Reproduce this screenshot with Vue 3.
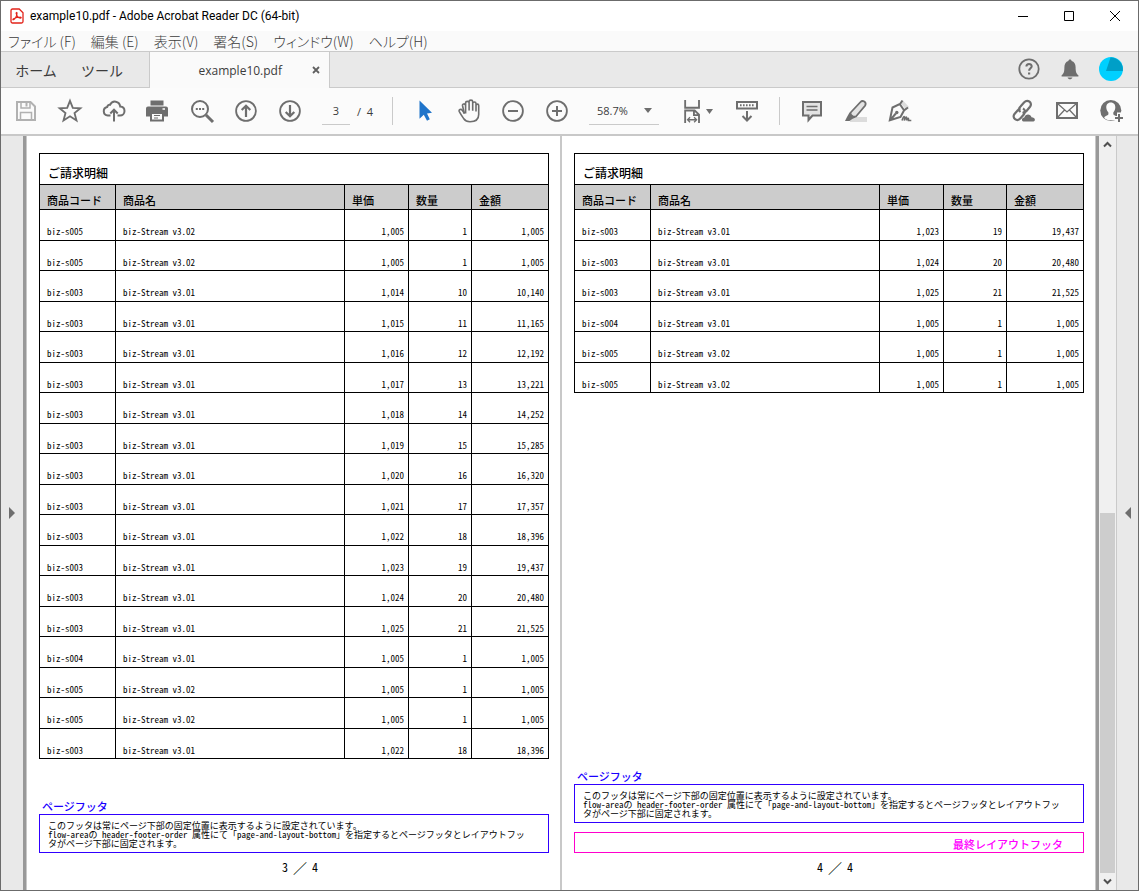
<script setup>
import { ref } from 'vue'

const menus = ['ファイル (F)', '編集 (E)', '表示(V)', '署名(S)', 'ウィンドウ(W)', 'ヘルプ(H)']
const headings = ['商品コード', '商品名', '単価', '数量', '金額']

const row = (code, version, price, qty, total) => ({ code, name: `biz-Stream v${version}`, price, qty, total })

const tail = [
  row('biz-s003', '3.01', '1,023', 19, '19,437'),
  row('biz-s003', '3.01', '1,024', 20, '20,480'),
  row('biz-s003', '3.01', '1,025', 21, '21,525'),
  row('biz-s004', '3.01', '1,005', 1, '1,005'),
  row('biz-s005', '3.02', '1,005', 1, '1,005'),
  row('biz-s005', '3.02', '1,005', 1, '1,005'),
]

const pages = [
  {
    number: 3,
    last: false,
    rows: [
      row('biz-s005', '3.02', '1,005', 1, '1,005'),
      row('biz-s005', '3.02', '1,005', 1, '1,005'),
      row('biz-s003', '3.01', '1,014', 10, '10,140'),
      row('biz-s003', '3.01', '1,015', 11, '11,165'),
      row('biz-s003', '3.01', '1,016', 12, '12,192'),
      row('biz-s003', '3.01', '1,017', 13, '13,221'),
      row('biz-s003', '3.01', '1,018', 14, '14,252'),
      row('biz-s003', '3.01', '1,019', 15, '15,285'),
      row('biz-s003', '3.01', '1,020', 16, '16,320'),
      row('biz-s003', '3.01', '1,021', 17, '17,357'),
      row('biz-s003', '3.01', '1,022', 18, '18,396'),
      ...tail,
      row('biz-s003', '3.01', '1,022', 18, '18,396'),
    ],
  },
  { number: 4, last: true, rows: tail },
]

const currentPage = ref('3')
</script>

<template>
  <div class="window">
    <header class="titlebar">
      <svg class="app-icon" viewBox="0 0 14 16" aria-hidden="true">
        <path d="M2.5 1h6.7L13 4.7v8.8a1.5 1.5 0 0 1-1.5 1.5h-9A1.5 1.5 0 0 1 1 13.500v-11A1.500 1.500 0 0 1 2.500 1z" fill="#fff" stroke="#e2231a" stroke-width="1.300" />
        <path d="M3.300 11.800c1.500-.6 3.700-3.500 3.700-6.500 0-1.200-1-1-.8 0 .4 2.300 2 4.400 4.300 4.800 1.100.1.800-1.200-.7-1.100-2.300.1-4.300.8-6.200 1.800-.9.500-.8 1.200-.3 1z" fill="none" stroke="#e2231a" stroke-width="1.200" />
      </svg>
      <h1 class="title">example10.pdf - Adobe Acrobat Reader DC (64-bit)</h1>
      <div class="window-buttons">
        <button type="button" aria-label="最小化"><svg viewBox="0 0 12 12"><path d="M1 6.500h10" /></svg></button>
        <button type="button" aria-label="最大化"><svg viewBox="0 0 12 12"><path d="M1.500 1.500h9v9h-9z" /></svg></button>
        <button type="button" aria-label="閉じる"><svg viewBox="0 0 12 12"><path d="M1 1l10 10M11 1L1 11" /></svg></button>
      </div>
    </header>

    <nav class="menubar">
      <button v-for="menu in menus" :key="menu" type="button">{{ menu }}</button>
    </nav>

    <div class="tabs">
      <button type="button" class="tab home">ホーム</button>
      <button type="button" class="tab tools">ツール</button>
      <div class="doc-tab">
        <span>example10.pdf</span>
        <button type="button" aria-label="タブを閉じる">
          <svg viewBox="0 0 8 8"><path d="M1 1l6 6M7 1L1 7" stroke="#606060" stroke-width="1.800" /></svg>
        </button>
      </div>
      <div class="account">
        <button type="button" aria-label="ヘルプ">
          <svg class="line" viewBox="0 0 24 24">
            <circle cx="12" cy="12" r="9.700" stroke-width="1.800" />
            <path d="M9.400 9.600c0-3.500 5.400-3.300 5.300-.2-.1 1.900-2.600 2.100-2.600 4.400" stroke-width="2" />
            <path d="M11 15.500h2.200v2H11z" class="solid" />
          </svg>
        </button>
        <button type="button" aria-label="通知">
          <svg viewBox="0 0 24 24">
            <path class="solid" d="M12 2.500c1 0 1.600.6 1.600 1.500 2.700.8 4 3 4 6 0 5 .8 6.800 2.800 8.200v1.300H3.600v-1.300c2-1.400 2.800-3.200 2.800-8.200 0-3 1.300-5.200 4-6 0-.9.600-1.500 1.600-1.500zM9.500 20.500h5c-.5 1.200-1.400 1.800-2.500 1.800s-2-.6-2.500-1.800z" />
          </svg>
        </button>
        <button type="button" class="avatar" aria-label="アカウント">
          <svg viewBox="0 0 24 24">
            <circle cx="12" cy="12" r="12" fill="#00d0ff" />
            <path d="M7 14L11.500 .5A12 12 0 0 1 23.800 14z" fill="#009fc7" />
          </svg>
        </button>
      </div>
    </div>

    <div class="toolbar">
      <div class="group">
        <button type="button" class="disabled" aria-label="保存">
          <svg class="line" viewBox="0 0 24 24"><path d="M3 3h13.500L21 7.500V21H3z" stroke-width="2" /><path d="M7 3v6h9V3M6.500 21v-7.500h11V21" stroke-width="1.500" /><path d="M12.500 4v3.500" stroke-width="2" /></svg>
        </button>
        <button type="button" aria-label="スター">
          <svg class="line" viewBox="0 0 24 24"><path d="M12 1.800l2.800 7.100 7.600.4-5.900 4.800 2 7.400-6.500-4.200-6.500 4.200 2-7.400-5.900-4.800 7.600-.4z" stroke-width="1.800" /></svg>
        </button>
        <button type="button" aria-label="クラウドにアップロード">
          <svg class="line" viewBox="0 0 24 24"><path d="M8.500 16.500H5.800a4.300 4.300 0 0 1-.6-8.500c.4-2 1.800-2.500 2.800-2.200 2.500-5 9.500-4 10.200 1.700 2.700.2 4.300 2 4.300 4.500 0 2.700-2 4.500-4.500 4.500h-2.500M12 22.500V11M8.300 14.500L12 10.700l3.700 3.800" stroke-width="2" /></svg>
        </button>
        <button type="button" aria-label="印刷">
          <svg viewBox="0 0 24 24"><path class="solid" d="M4.500 1.500h13v5h-13zM2 7.500h18a2 2 0 0 1 2 2v8h-4v-3H4v3H0v-8a2 2 0 0 1 2-2z" /><path class="line" d="M5 14h12v7.500H5z" stroke-width="2" /><path class="line" d="M8 16.500h6M8 19h4" stroke-width="1.200" /><path d="M16.500 10h2.500" stroke="#fff" stroke-width="1.500" /></svg>
        </button>
        <button type="button" aria-label="検索">
          <svg class="line" viewBox="0 0 24 24"><circle cx="10" cy="10" r="8" stroke-width="2" /><path d="M16 16l7 7" stroke-width="3" /><path d="M5.800 10h2M9 10h2M12.200 10h2" stroke-width="2" /></svg>
        </button>
        <button type="button" aria-label="前のページ">
          <svg class="line" viewBox="0 0 24 24"><circle cx="12" cy="12" r="9.900" stroke-width="1.800" /><path d="M12 18V7M7.700 11L12 6.700l4.300 4.300" stroke-width="2.200" /></svg>
        </button>
        <button type="button" aria-label="次のページ">
          <svg class="line" viewBox="0 0 24 24"><circle cx="12" cy="12" r="9.900" stroke-width="1.800" /><path d="M12 6v11M7.700 13l4.300 4.300 4.300-4.300" stroke-width="2.200" /></svg>
        </button>
        <label class="page-field"><input v-model="currentPage" type="text" aria-label="ページ番号" /><span>/&nbsp; 4</span></label>
      </div>

      <div class="group select-group">
        <button type="button" aria-label="選択ツール">
          <svg viewBox="0 0 24 24"><path d="M6.500 1.500v18.300l4.300-4.100 3.200 6 2.800-1.400-2.800-5.800 5-.7z" fill="#1f74ca" /></svg>
        </button>
        <button type="button" aria-label="手のひらツール">
          <svg class="line" viewBox="0 0 24 24"><path d="M7.500 14.500L5.300 11.300c-1.300-1.700-4-.7-3 1.300 1.800 3.300 3.300 5.400 4.500 7.200 1.300 1.900 2.800 2.900 6.200 2.900 5.500 0 8.700-2.700 8.700-7.200V6.600c0-2-2.700-2-2.700 0v6M19 11V4.500c0-2.100-3.300-2.100-3.300 0v7.200M15.700 11.500v-9c0-1.800-3.600-1.800-3.600 0v9M12.100 11.500V3.700c0-1.800-3.500-1.800-3.500 0v10.800" stroke-width="1.600" /><path d="M7.300 14.500L5.500 6.500c-.3-1.800 2.500-2.200 2.900-.4" stroke-width="1.600" /></svg>
        </button>
        <button type="button" aria-label="縮小">
          <svg class="line" viewBox="0 0 24 24"><circle cx="12" cy="12" r="9.900" stroke-width="1.800" /><path d="M7 12h10" stroke-width="2" /></svg>
        </button>
        <button type="button" aria-label="拡大">
          <svg class="line" viewBox="0 0 24 24"><circle cx="12" cy="12" r="9.900" stroke-width="1.800" /><path d="M7 12h10M12 7v10" stroke-width="2" /></svg>
        </button>
        <button type="button" class="zoom-level" aria-label="表示倍率">58.7%<svg class="caret" viewBox="0 0 8 5"><path class="solid" d="M0 0h8L4 5z" /></svg></button>
        <button type="button" class="fit" aria-label="幅に合わせる">
          <svg class="line" viewBox="0 0 24 26"><path d="M3.500 1v8.500h15V1M3.500 26V12.500h10.300l4.700 4.500v9M13 12.500v5h5.500" stroke-width="2" /><path d="M6.500 22.500h9M8.800 19.800l-2.700 2.700 2.700 2.700M13.200 19.800l2.700 2.700-2.700 2.700" stroke-width="1.400" /></svg>
          <svg class="caret" viewBox="0 0 8 5"><path class="solid" d="M0 0h7L3.500 5z" /></svg>
        </button>
        <button type="button" aria-label="ツールバーを下に表示">
          <svg class="line" viewBox="0 0 24 24"><path d="M2 3h20v6.500H2z" stroke-width="2" /><path d="M5 6.200h14" stroke-width="2" stroke-dasharray="1.600 1.400" /><path d="M12 12v9M7.500 17l4.500 4.500 4.500-4.500" stroke-width="2" /></svg>
        </button>
      </div>

      <div class="group note-group">
        <button type="button" aria-label="コメント">
          <svg class="line" viewBox="0 0 24 24"><path d="M3 3h18v13.500H12.500L8.500 21v-4.500H3z" fill="#e3e3e3" stroke-width="2" /><path d="M6.500 7.500h11M6.500 11h11" stroke-width="1.400" /></svg>
        </button>
        <button type="button" aria-label="ハイライト">
          <svg class="line" viewBox="0 0 24 24"><path d="M6 18h17v5H6z" fill="#dcdcdc" stroke="none" /><path d="M6.700 13.500L16.500 3c2-2.200 6.500-.2 4.700 3.500L12 17.500l-3.500.5-2.300-2z" fill="#e3e3e3" stroke-width="1.800" /><path class="solid" d="M5.500 13.500l6 5-3.300 1.500-2.700 2H1l2-4z" /></svg>
        </button>
        <button type="button" aria-label="署名">
          <svg class="line" viewBox="0 0 24 24"><path d="M12.500 4L15 1.500l6 6.500-3 2.500z" fill="#dcdcdc" stroke="none" /><path d="M14.500 1.500L12 5 4.500 8.500 1.800 21.300 12.500 18l3.500-6.500 4-3M11.700 5l4.500 6.500M2.300 21l5.500-6.500" stroke-width="2" /><circle cx="8.800" cy="13.500" r="1.700" class="solid" /><path d="M14 21.500c2-5.500 3-5 2.300 0 1.500-4.500 3-4.500 2.200 0 1.300-3 2.300-3 2 0h2.800" stroke-width="1.600" /></svg>
        </button>
      </div>

      <div class="group share-group">
        <button type="button" aria-label="リンクを共有">
          <svg class="line" viewBox="0 0 24 24"><path d="M9.500 13c-2.500-2-1.500-4 0-5.500l3.500-4c3.700-4 9 .5 6 4.300l-3.500 4.200c-1 1.200-2.500 1.700-4 1.200M12 9.500c2.700 1.500 2.300 4.200.8 6L9.500 19.300c-3.500 4-9-.3-6-4.300L7 11c.7-.9 1.500-1.300 2.700-1.400" stroke-width="2.200" /><path class="solid" d="M12.500 22.500c-2.300-.5-2-3.700.8-4 1-4 6.200-4.200 7.200-.3 4 0 4.300 4 1.800 4.300z" /></svg>
        </button>
        <button type="button" aria-label="メールで送信">
          <svg class="line" viewBox="0 0 24 24"><path d="M2 4h20v15H2z" stroke-width="2" /><path d="M2.500 4.500L12 13l9.500-8.500M2.500 18.500l7-7.500M21.500 18.500l-7-7.500" stroke-width="1.300" /></svg>
        </button>
        <button type="button" aria-label="ユーザーを追加">
          <svg viewBox="0 0 24 24"><circle cx="11.800" cy="11.500" r="10.500" class="solid" /><path d="M11.800 3.500c3.200 0 4.700 2.300 4.500 5.200-.2 2.300-1 3.600-2 4.800v1.700c.2.900 1.700 1.300 3.200 2v2.500c-3.500 2.200-8 2.200-11.400 0l-1-1.500c1.700-1.700 4.200-2 4.300-3v-1.700c-1-1.200-1.900-2.500-2.100-4.800-.2-2.900 1.300-5.200 4.500-5.200z" fill="#fbfbfb" /><path d="M20 13.500v10.500M14.500 19h9.500" stroke="#fbfbfb" stroke-width="4" /><path d="M20 15v8M16 19h8" stroke="#6e6e6e" stroke-width="2" /></svg>
        </button>
      </div>
    </div>

    <div class="viewer">
      <button type="button" class="rail left" aria-label="ナビゲーションパネルを開く">
        <svg viewBox="0 0 6 12"><path class="solid" d="M0 0l6 6-6 6z" /></svg>
      </button>

      <main class="canvas">
        <article v-for="page in pages" :key="page.number" class="page">
          <table>
            <caption>ご請求明細</caption>
            <colgroup>
              <col class="c-code" /><col /><col class="c-price" /><col class="c-qty" /><col class="c-total" />
            </colgroup>
            <thead>
              <tr><th v-for="heading in headings" :key="heading" scope="col">{{ heading }}</th></tr>
            </thead>
            <tbody>
              <tr v-for="(item, index) in page.rows" :key="index">
                <td>{{ item.code }}</td>
                <td>{{ item.name }}</td>
                <td class="num">{{ item.price }}</td>
                <td class="num">{{ item.qty }}</td>
                <td class="num">{{ item.total }}</td>
              </tr>
            </tbody>
          </table>

          <footer>
            <h2>ページフッタ</h2>
            <p class="note">このフッタは常にページ下部の固定位置に表示するように設定されています。<br />flow-areaの header-footer-order 属性にて「page-and-layout-bottom」を指定するとページフッタとレイアウトフッ<br />タがページ下部に固定されます。</p>
            <p v-if="page.last" class="final">最終レイアウトフッタ</p>
            <p class="page-number"><span>{{ page.number }}</span><span class="slash">／</span><span>4</span></p>
          </footer>
        </article>
      </main>

      <div class="scrollbar">
        <button type="button" aria-label="上へスクロール"><svg viewBox="0 0 9 7"><path d="M1 5.500L4.500 2 8 5.500" /></svg></button>
        <div class="track"><div class="thumb"></div></div>
        <button type="button" aria-label="下へスクロール"><svg viewBox="0 0 9 7"><path d="M1 1.500L4.500 5 8 1.500" /></svg></button>
      </div>

      <button type="button" class="rail right" aria-label="ツールパネルを開く">
        <svg viewBox="0 0 6 12"><path class="solid" d="M6 0L0 6l6 6z" /></svg>
      </button>
    </div>
  </div>
</template>

<style>
body {
  margin: 0;
}
</style>

<style scoped>
.window {
  box-sizing: border-box;
  min-height: 100vh;
  display: flex;
  flex-direction: column;
  border: 1px solid #6b6b6b;
  background: #fafafa;
  color: #3c3c3c;
  font-family: "Open Sans", "Noto Sans CJK JP", sans-serif;
}

button {
  display: flex;
  align-items: center;
  justify-content: center;
  padding: 0;
  border: 0;
  background: none;
  color: inherit;
  font: inherit;
}

svg {
  display: block;
  overflow: visible;
}

.line {
  fill: none;
  stroke: #6e6e6e;
}

.solid {
  fill: #6e6e6e;
  stroke: none;
}

.titlebar {
  display: flex;
  align-items: center;
  height: 30px;
  padding-left: 9px;
  background: #fff;
}

.app-icon {
  width: 14px;
  height: 16px;
}

.title {
  margin: 0 0 0 6px;
  color: #000;
  font-family: Roboto, sans-serif;
  font-size: 12px;
  font-weight: 400;
  line-height: 18px;
}

.window-buttons {
  display: flex;
  margin-left: auto;
}

.window-buttons button {
  width: 46px;
  height: 30px;
}

.window-buttons svg {
  width: 12px;
  height: 12px;
  fill: none;
  stroke: #000;
}

.menubar {
  display: flex;
  gap: 15px;
  height: 20px;
  padding-left: 7px;
  font-family: "Noto Sans CJK JP", sans-serif;
  font-size: 14px;
  font-weight: 300;
  line-height: 20px;
  font-feature-settings: "palt";
}

.tabs {
  display: flex;
  height: 35px;
  border-top: 1px solid #cacaca;
  border-bottom: 1px solid #cacaca;
  background: #e9e9e9;
}

.tab {
  font-size: 14px;
}

.home {
  width: 70px;
}

.tools {
  width: 62px;
  margin-right: 16px;
}

.doc-tab {
  display: flex;
  align-items: center;
  justify-content: flex-end;
  gap: 30px;
  box-sizing: border-box;
  width: 181px;
  height: 36px;
  padding-right: 9px;
  border: solid #cacaca;
  border-width: 0 1px;
  background: #fafafa;
  font-size: 12px;
}

.doc-tab svg {
  width: 8px;
  height: 8px;
}

.account {
  display: flex;
  align-items: center;
  gap: 17px;
  margin-left: auto;
  padding: 0 15px 2px 0;
}

.account svg,
.toolbar svg {
  width: 24px;
  height: 24px;
}

.toolbar {
  display: flex;
  align-items: center;
  height: 46px;
  border-bottom: 2px solid #c8c8c8;
  background: #fbfbfb;
  font-size: 11px;
}

.group {
  display: flex;
  align-items: center;
  gap: 20px;
  height: 28px;
  padding-left: 13px;
}

.disabled .line {
  stroke: #b1b1b1;
}

.page-field {
  display: flex;
  align-items: center;
  gap: 7px;
  width: 70px;
}

.page-field input {
  box-sizing: border-box;
  width: 28px;
  height: 28px;
  padding: 0;
  border: 0;
  border-bottom: 1px solid #cacaca;
  background: none;
  color: inherit;
  font: inherit;
  text-align: center;
}

.select-group {
  padding-left: 20px;
  border-left: 1px solid #cacaca;
}

.zoom-level {
  justify-content: space-between;
  box-sizing: border-box;
  width: 70px;
  height: 28px;
  padding: 0 7px 0 8px;
  border-bottom: 1px solid #cacaca;
}

.toolbar .caret {
  width: 8px;
  height: 5px;
}

.fit {
  gap: 1px;
  width: 36px;
}

.note-group {
  margin-left: 20px;
  padding-left: 20px;
  border-left: 1px solid #cacaca;
}

.share-group {
  margin-left: auto;
  padding-right: 15px;
}

.viewer {
  display: flex;
  flex: 1;
  background: #e9e9e9;
}

.rail {
  width: 22px;
}

.rail svg {
  width: 6px;
  height: 12px;
}

.rail.right {
  border-left: 1px solid #cacaca;
}

.canvas {
  display: flex;
  flex: 1;
  gap: 2px;
  padding: 0 1px;
  border: solid #999;
  border-width: 0 3px;
  background: #c8c8c8;
}

.page {
  display: flex;
  flex: 1;
  flex-direction: column;
  padding: 17px 11px 13px 12px;
  background: #fff;
  color: #000;
  font-family: "Noto Sans CJK JP", sans-serif;
  font-size: 9px;
  font-feature-settings: "hwid";
  font-variant-ligatures: none;
}

table {
  width: 100%;
  border: solid #000;
  border-width: 1px 0 0 1px;
  border-spacing: 0;
  table-layout: fixed;
}

caption {
  box-sizing: border-box;
  height: 31px;
  padding: 10px 8px 0;
  border: solid #000;
  border-width: 1px 1px 0;
  font-size: 12px;
  font-weight: 500;
  line-height: 18px;
  text-align: left;
}

.c-code {
  width: 76px;
}

.c-price {
  width: 64px;
}

.c-qty {
  width: 63px;
}

.c-total {
  width: 77px;
}

th,
td {
  box-sizing: border-box;
  padding: 0 4px 2px 7px;
  border: solid #000;
  border-width: 0 1px 1px 0;
  line-height: 12px;
  text-align: left;
  vertical-align: bottom;
}

th {
  height: 25px;
  padding-bottom: 3px;
  background: #ccc;
  font-size: 11px;
  font-weight: 500;
}

td {
  height: 31px;
}

tr:nth-child(even) td {
  height: 30px;
  padding-bottom: 1px;
}

td.num {
  text-align: right;
}

footer {
  margin-top: auto;
}

h2 {
  margin: 0;
  padding-left: 3px;
  color: #1a00ff;
  font-size: 11px;
  font-weight: 500;
  line-height: 16px;
}

.note {
  margin: 0;
  padding: 6px 8px 4px;
  border: 1px solid #3000ff;
  line-height: 9px;
  white-space: nowrap;
}

.final {
  margin: 9px 0 0;
  padding: 3px 20px 0;
  border: 1px solid #f0c;
  color: #f0f;
  font-size: 11px;
  font-weight: 500;
  line-height: 16px;
  text-align: right;
}

.page-number {
  display: flex;
  justify-content: center;
  gap: 5px;
  margin: 4px 0 0;
  padding-left: 12px;
  font-size: 12px;
  line-height: 20px;
}

.slash {
  font-size: 14px;
  font-feature-settings: normal;
}

.scrollbar {
  display: flex;
  flex-direction: column;
  width: 17px;
  background: #f0f0f0;
}

.scrollbar button {
  height: 17px;
}

.scrollbar svg {
  width: 9px;
  height: 7px;
  fill: none;
  stroke: #505050;
  stroke-width: 2;
}

.track {
  display: flex;
  flex: 1;
  flex-direction: column;
  justify-content: flex-end;
}

.thumb {
  height: 50%;
  margin: 0 1px;
  background: #cdcdcd;
}
</style>
